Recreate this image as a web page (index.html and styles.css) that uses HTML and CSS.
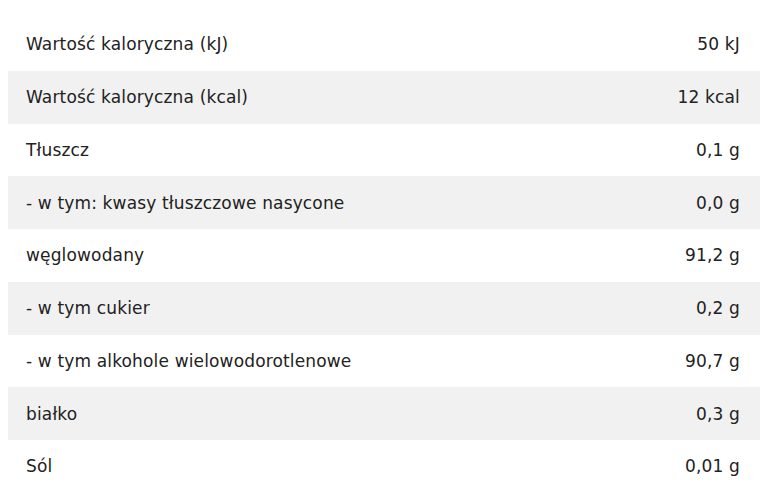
FILE: index.html
```html
<!DOCTYPE html>
<html lang="pl">
<head>
<meta charset="utf-8">
<link rel="stylesheet" href="styles.css">
</head>
<body>
<table class="nutrition">
<tbody>
<tr><td>Wartość kaloryczna (kJ)</td><td class="val">50 kJ</td></tr>
<tr><td>Wartość kaloryczna (kcal)</td><td class="val">12 kcal</td></tr>
<tr><td>Tłuszcz</td><td class="val">0,1 g</td></tr>
<tr><td>- w tym: kwasy tłuszczowe nasycone</td><td class="val">0,0 g</td></tr>
<tr><td>węglowodany</td><td class="val">91,2 g</td></tr>
<tr><td>- w tym cukier</td><td class="val">0,2 g</td></tr>
<tr><td>- w tym alkohole wielowodorotlenowe</td><td class="val">90,7 g</td></tr>
<tr><td>białko</td><td class="val">0,3 g</td></tr>
<tr><td>Sól</td><td class="val">0,01 g</td></tr>
</tbody>
</table>
</body>
</html>
```
FILE: styles.css
```css
html, body {
  margin: 0;
  padding: 0;
  background: #ffffff;
}
body {
  padding: 18px 0 0 8px;
  font-family: "DejaVu Sans", "Open Sans", sans-serif;
  font-size: 17px;
  letter-spacing: 0.15px;
  color: #222222;
}
.nutrition {
  width: 752px;
  border-collapse: collapse;
}
.nutrition td {
  height: 52.75px;
  padding: 0 0 0 18px;
  box-sizing: border-box;
  vertical-align: middle;
}
.nutrition td.val {
  text-align: right;
  padding: 0 20px 0 0;
}
.nutrition tr:nth-child(even) td {
  background: #f1f1f1;
}
```
